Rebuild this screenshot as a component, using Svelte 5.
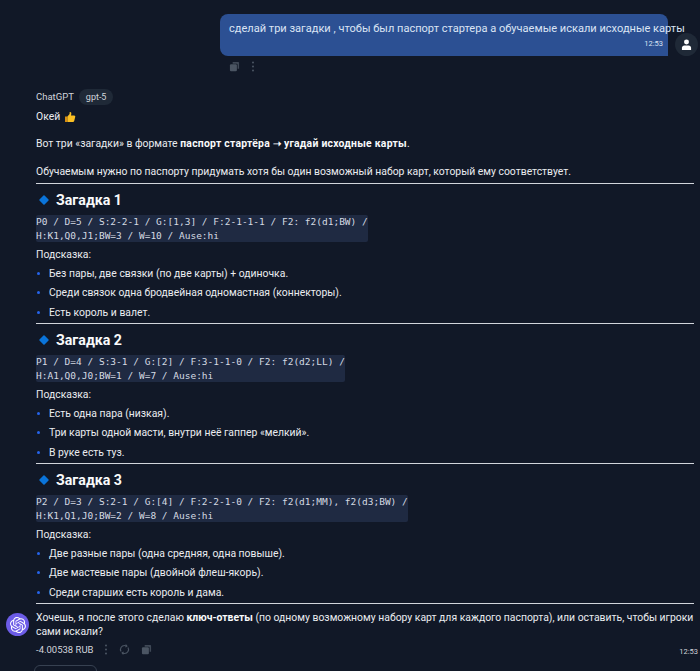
<script>
  const riddles = [
    { title: 'Загадка 1', code: ['P0 / D=5 / S:2-2-1 / G:[1,3] / F:2-1-1-1 / F2: f2(d1;BW) /', 'H:K1,Q0,J1;BW=3 / W=10 / Ause:hi'],
      hints: ['Без пары, две связки (по две карты) + одиночка.', 'Среди связок одна бродвейная одномастная (коннекторы).', 'Есть король и валет.'] },
    { title: 'Загадка 2', code: ['P1 / D=4 / S:3-1 / G:[2] / F:3-1-1-0 / F2: f2(d2;LL) /', 'H:A1,Q0,J0;BW=1 / W=7 / Ause:hi'],
      hints: ['Есть одна пара (низкая).', 'Три карты одной масти, внутри неё гаппер «мелкий».', 'В руке есть туз.'] },
    { title: 'Загадка 3', code: ['P2 / D=3 / S:2-1 / G:[4] / F:2-2-1-0 / F2: f2(d1;MM), f2(d3;BW) /', 'H:K1,Q1,J0;BW=2 / W=8 / Ause:hi'],
      hints: ['Две разные пары (одна средняя, одна повыше).', 'Две мастевые пары (двойной флеш-якорь).', 'Среди старших есть король и дама.'] },
  ];
</script>

{#snippet copyIcon()}
  <svg class="icon" viewBox="0 0 12 12" width="11" height="11"><path d="M4 1h6a1 1 0 0 1 1 1v6.4H9.4V4a1 1 0 0 0-1-1H4z" fill="currentColor" opacity=".8"/><rect x="1" y="3.6" width="7.6" height="7.6" rx="1.2" fill="currentColor"/></svg>
{/snippet}
{#snippet dotsIcon()}
  <svg class="icon" viewBox="0 0 4 12" width="4" height="11"><circle cx="2" cy="1.6" r="1.1" fill="currentColor"/><circle cx="2" cy="6" r="1.1" fill="currentColor"/><circle cx="2" cy="10.4" r="1.1" fill="currentColor"/></svg>
{/snippet}

<div class="page">
  <div class="user-row">
    <div class="bubble">
      <div class="bubble-text">сделай три загадки , чтобы был паспорт стартера а обучаемые искали исходные карты</div>
      <div class="bubble-time">12:53</div>
    </div>
    <div class="user-avatar">
      <svg viewBox="0 0 12 12" width="11" height="11"><circle cx="6" cy="3.2" r="2.7" fill="#fff"/><path d="M1 12V9.6C1 8 2.2 7 3.6 7h4.8C9.8 7 11 8 11 9.6V12z" fill="#fff"/></svg>
    </div>
  </div>
  <div class="user-actions">{@render copyIcon()}{@render dotsIcon()}</div>

  <div class="assistant-head">
    <span class="name">ChatGPT</span>
    <span class="badge">gpt-5</span>
  </div>

  <div class="content">
    <p class="first">Окей
      <svg class="thumb" viewBox="0 0 12 12" width="12" height="12"><path d="M1 5.4h2.4V11H1.6a.6.6 0 0 1-.6-.6z" fill="#d98f12"/><path d="M3.4 5.4 5.6 3V1.2c1.2-.4 1.9.5 1.7 1.7L7 4.4h3.1c1 0 1.4.8 1.1 1.5l-1 4.2c-.2.6-.7.9-1.2.9H3.4z" fill="#fbbf24"/></svg>
    </p>
    <p class="intro">Вот три «загадки» в формате <b class="wide">паспорт стартёра ➝ угадай исходные карты</b>.</p>
    <p class="intro second">Обучаемым нужно по паспорту придумать хотя бы один возможный набор карт, который ему соответствует.</p>

    {#each riddles as r}
      <hr />
      <h3>
        <svg viewBox="0 0 12 12" width="12" height="12"><rect x="2.4" y="2.4" width="7.2" height="7.2" rx=".8" transform="rotate(45 6 6)" fill="#0a74da"/></svg>
        {r.title}
      </h3>
      <code>{r.code[0]}<br />{r.code[1]}</code>
      <p class="hint-label">Подсказка:</p>
      <ul>
        {#each r.hints as h}<li>{h}</li>{/each}
      </ul>
    {/each}
    <hr />
  </div>

  <div class="closing">
    <div class="gpt-avatar">
      <svg viewBox="0 0 24 24" width="16" height="16" fill="#fff"><path d="M22.2819 9.8211a5.9847 5.9847 0 0 0-.5157-4.9108 6.0462 6.0462 0 0 0-6.5098-2.9A6.0651 6.0651 0 0 0 4.9807 4.1818a5.9847 5.9847 0 0 0-3.9977 2.9 6.0462 6.0462 0 0 0 .7427 7.0966 5.98 5.98 0 0 0 .511 4.9107 6.051 6.051 0 0 0 6.5146 2.9001A5.9847 5.9847 0 0 0 13.2599 24a6.0557 6.0557 0 0 0 5.7718-4.2058 5.9894 5.9894 0 0 0 3.9977-2.9001 6.0557 6.0557 0 0 0-.7475-7.0729zm-9.022 12.6081a4.4755 4.4755 0 0 1-2.8764-1.0408l.1419-.0804 4.7783-2.7582a.7948.7948 0 0 0 .3927-.6813v-6.7369l2.02 1.1686a.071.071 0 0 1 .038.052v5.5826a4.504 4.504 0 0 1-4.4945 4.4944zm-9.6607-4.1254a4.4708 4.4708 0 0 1-.5346-3.0137l.142.0852 4.783 2.7582a.7712.7712 0 0 0 .7806 0l5.8428-3.3685v2.3324a.0804.0804 0 0 1-.0332.0615L9.74 19.9502a4.4992 4.4992 0 0 1-6.1408-1.6464zM2.3408 7.8956a4.485 4.485 0 0 1 2.3655-1.9728V11.6a.7664.7664 0 0 0 .3879.6765l5.8144 3.3543-2.0201 1.1685a.0757.0757 0 0 1-.071 0l-4.8303-2.7865A4.504 4.504 0 0 1 2.3408 7.872zm16.5963 3.8558L13.1038 8.364 15.1192 7.2a.0757.0757 0 0 1 .071 0l4.8303 2.7913a4.4944 4.4944 0 0 1-.6765 8.1042v-5.6772a.79.79 0 0 0-.407-.667zm2.0107-3.0231l-.142-.0852-4.7735-2.7818a.7759.7759 0 0 0-.7854 0L9.409 9.2297V6.8974a.0662.0662 0 0 1 .0284-.0615l4.8303-2.7866a4.4992 4.4992 0 0 1 6.6802 4.66zM8.3065 12.863l-2.02-1.1638a.0804.0804 0 0 1-.038-.0567V6.0742a4.4992 4.4992 0 0 1 7.3757-3.4537l-.142.0805L8.704 5.459a.7948.7948 0 0 0-.3927.6813zm1.0976-2.3654l2.602-1.4998 2.6069 1.4998v2.9994l-2.5974 1.4997-2.6067-1.4997Z"/></svg>
    </div>
    <div class="closing-body">
      <p>Хочешь, я после этого сделаю <b>ключ-ответы</b> (по одному возможному набору карт для каждого паспорта), или оставить, чтобы игроки сами искали?</p>
      <div class="meta">
        <span class="cost">-4.00538 RUB</span>
        {@render dotsIcon()}
        <svg class="icon" viewBox="0 0 12 12" width="11" height="11" fill="none" stroke="currentColor" stroke-width="1.2"><path d="M2.2 8.2A4.4 4.4 0 0 1 6 1.6c.7 0 1.4.2 2 .5"/><path d="M9.8 3.8A4.4 4.4 0 0 1 6 10.4c-.7 0-1.4-.2-2-.5"/><path d="M7.2.8 8.6 2.3 7 3.4M4.8 11.2 3.4 9.7 5 8.6"/></svg>
        {@render copyIcon()}
      </div>
    </div>
    <span class="closing-time">12:53</span>
  </div>

  <div class="next-box"></div>
</div>

<style>
  :global(body) { background: #111827; }
  .page { width: 700px; height: 671px; overflow: hidden; background: #111827; color: #eaecf0; font-family: Roboto, sans-serif; font-size: 10.4px; line-height: 19px; box-sizing: border-box; padding-top: 14px; }
  .user-row { display: flex; justify-content: flex-end; align-items: flex-end; gap: 7px; padding-right: 2px; }
  .bubble { width: 448px; height: 42px; box-sizing: border-box; background: #2c5093; border-radius: 8px 8px 0 8px; padding: 7px 5px 0 9px; color: #dbe4f3; font-size: 11.05px; }
  .bubble-text { line-height: 16px; white-space: nowrap; }
  .bubble-time { text-align: right; font-size: 7.5px; line-height: 10px; margin-top: 2px; }
  .user-avatar { width: 23px; height: 23px; border-radius: 50%; background: #1f2937; display: flex; align-items: center; justify-content: center; }
  .user-actions { display: flex; gap: 11px; align-items: center; margin: 5px 0 0 229px; height: 11px; color: #4b5563; }
  .icon { display: block; flex: none; }
  .assistant-head { display: flex; align-items: center; gap: 5px; margin: 16px 0 0 36px; height: 17px; font-size: 9.5px; color: #d1d5db; }
  .badge { background: #1f2937; border-radius: 9px; padding: 0 7px; line-height: 16px; font-size: 9px; }
  .content { margin: 3px 6px 0 36px; }
  p { margin: 0; }
  .first { height: 18px; line-height: 18px; display: flex; gap: 4px; align-items: center; }
  .intro { margin-top: 8px; }
  .second { margin-top: 9px; margin-bottom: 2px; }
  b { font-weight: 700; color: #f9fafb; }
  b.wide { letter-spacing: .25px; }
  hr { border: none; height: 1px; background: #d1d5db; margin: 1px 0 0; }
  h3 { margin: 7px 0 0 2px; display: flex; align-items: center; gap: 6px; font-size: 14.2px; line-height: 18px; font-weight: 700; color: #f9fafb; }
  code { display: inline-block; vertical-align: top; margin-top: 6px; background: #1f2a42; font-family: "DejaVu Sans Mono", monospace; font-size: 9.5px; line-height: 13.5px; color: #d5dae3; border-radius: 2px; }
  .hint-label { margin-top: 2.5px; }
  ul { list-style: none; margin: 0; padding: 0; }
  li { position: relative; padding-left: 13px; line-height: 19.5px; }
  li::before { content: ''; position: absolute; left: 1px; top: 8px; width: 3px; height: 3px; border-radius: 50%; background: #2563eb; }
  .closing { display: flex; margin-top: 1px; padding: 0 2px 0 6px; gap: 7px; position: relative; }
  .gpt-avatar { width: 23px; height: 23px; margin-top: 8px; border-radius: 50%; background: #6c5ce7; display: flex; align-items: center; justify-content: center; flex: none; }
  .closing-body { flex: 1; padding-right: 2px; }
  .closing-body p { line-height: 14px; margin-top: 6px; }
  .meta { display: flex; align-items: center; gap: 11px; color: #4b5563; margin-top: 3px; height: 14px; }
  .cost { color: #d1d5db; font-size: 9.5px; }
  .closing-time { position: absolute; right: 2px; top: 42px; font-size: 7.5px; line-height: 10px; color: #d1d5db; }
  .next-box { width: 63px; height: 20px; margin: 9px 0 0 34px; border: 1px solid #374151; border-radius: 6px; box-sizing: border-box; }
</style>
